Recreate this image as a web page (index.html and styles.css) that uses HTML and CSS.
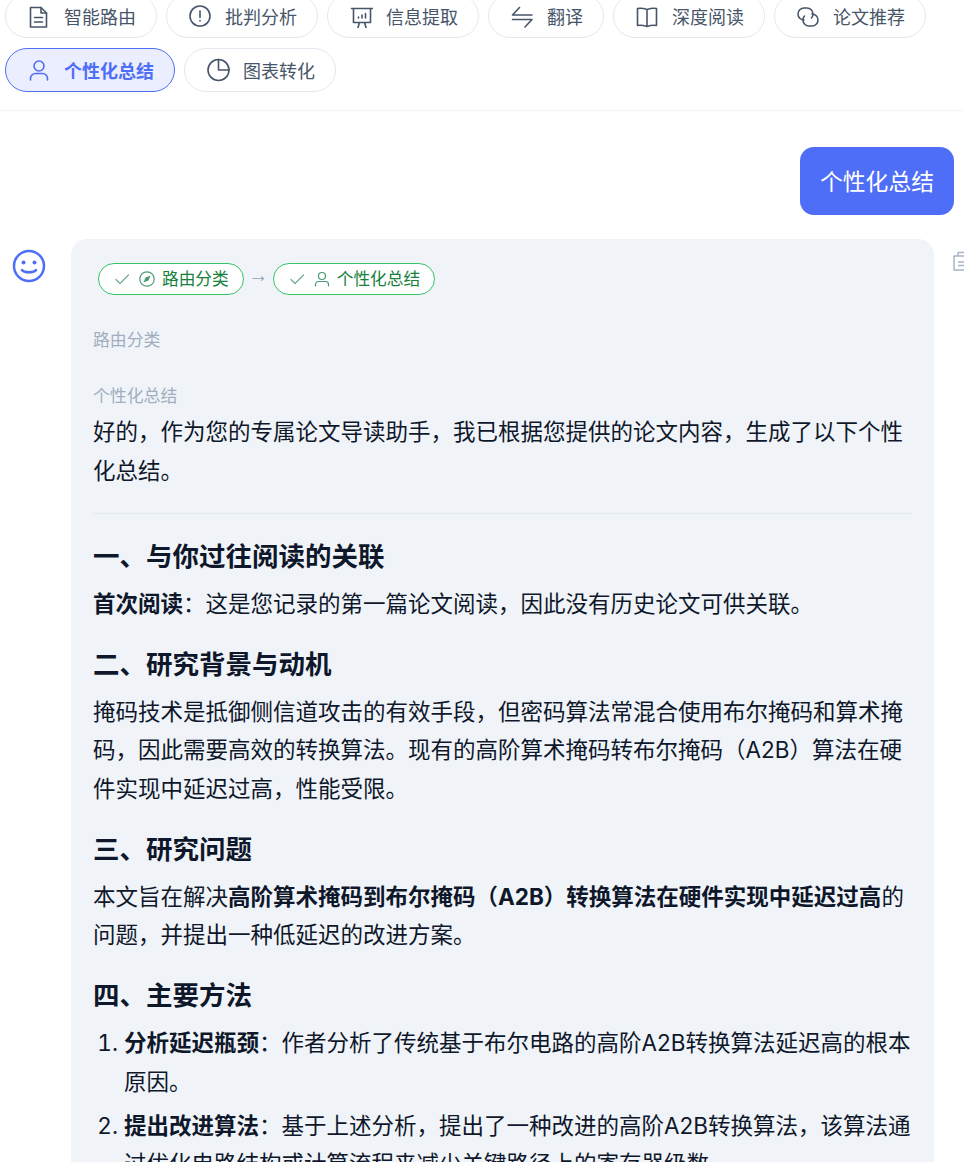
FILE: index.html
```html
<!DOCTYPE html>
<html lang="zh-CN">
<head>
<meta charset="UTF-8">
<meta name="viewport" content="width=device-width, initial-scale=1.0">
<title>个性化总结</title>
<link rel="stylesheet" href="styles.css">
</head>
<body>
<div class="tools">
    <button class="tool">
        <svg viewBox="0 0 24 24"><path d="M3.500 3.500h10.500l5.500 5.500v14h-16z"/><path d="M14 3.500V9h5.500M7.500 13.500h8M7.500 18h8"/></svg>
        <span>智能路由</span>
    </button>
    <button class="tool">
        <svg viewBox="0 0 24 24"><circle cx="12" cy="12" r="10"/><path d="M12 7v6.500M12 16.500v.5"/></svg>
        <span>批判分析</span>
    </button>
    <button class="tool">
        <svg viewBox="0 0 24 24"><path d="M2.500 4.500h21M4.500 4.500v14h17v-14M9 23.500l1.500-5M17 23.500l-1.500-5M9.500 14v-1M13 14v-3M16.500 14V9.500"/></svg>
        <span>信息提取</span>
    </button>
    <button class="tool">
        <svg viewBox="0 0 24 24"><path d="M9.500 3.500 2.500 11H22M2.500 15.500H22L15 23"/></svg>
        <span>翻译</span>
    </button>
    <button class="tool">
        <svg viewBox="0 0 24 24"><path d="M12 5.500C9 4.500 5 4 2.500 4.500V21.500C6 21 9 21.500 12 22.500 15 21.500 18 21 21.500 21.500V4.500C19 4 15 4.500 12 5.500zM12 5.500V22.500"/></svg>
        <span>深度阅读</span>
    </button>
    <button class="tool">
        <svg viewBox="0 0 24 24"><path d="M8 16A6 6 0 0 1 8 4H11A6 6 0 0 1 17 10 6 6 0 0 1 15.500 14"/><path d="M16 10A6 6 0 0 1 16 22H13A6 6 0 0 1 7 16 6 6 0 0 1 8.500 12"/></svg>
        <span>论文推荐</span>
    </button>
    <button class="tool active">
        <svg viewBox="0 0 24 24"><circle cx="12" cy="8" r="5"/><path d="M3.500 22v-1.500a5 5 0 0 1 5-5h7a5 5 0 0 1 5 5V22"/></svg>
        <span>个性化总结</span>
    </button>
    <button class="tool">
        <svg viewBox="0 0 24 24"><circle cx="12.500" cy="12" r="10.500"/><path d="M12.500 1.500V12H23"/></svg>
        <span>图表转化</span>
    </button>
</div>

<div class="chat">
    <div class="user-row">
        <div class="bubble">个性化总结</div>
    </div>
    <div class="bot-row">
        <svg class="avatar" viewBox="0 0 34 34"><circle cx="17" cy="17" r="15"/><circle class="eye" cx="11.500" cy="13.500" r="2"/><circle class="eye" cx="22.500" cy="13.500" r="2"/><path d="M10 21c2 3 12 3 14 0"/></svg>
        <div class="card">
            <div class="steps">
                <div class="step">
                    <svg class="check" viewBox="0 0 16 16"><path d="M2 8.500 6 12.500 14.500 4"/></svg>
                    <svg viewBox="0 0 16 16"><circle cx="8" cy="8" r="7.200"/><path class="fill" d="M11.500 4.500 9.500 9.500 4.500 11.500 6.500 6.500z"/></svg>
                    <span>路由分类</span>
                </div>
                <span class="arrow">→</span>
                <div class="step">
                    <svg class="check" viewBox="0 0 16 16"><path d="M2 8.500 6 12.500 14.500 4"/></svg>
                    <svg viewBox="0 0 16 16"><circle cx="8" cy="5" r="3.500"/><path d="M1.500 15v-1.500a3 3 0 0 1 3-3h7a3 3 0 0 1 3 3V15"/></svg>
                    <span>个性化总结</span>
                </div>
            </div>
            <div class="label first">路由分类</div>
            <div class="label second">个性化总结</div>
            <div class="answer">
                <p>好的，作为您的专属论文导读助手，我已根据您提供的论文内容，生成了以下个性化总结。</p>
                <hr>
                <h2>一、与你过往阅读的关联</h2>
                <p><strong>首次阅读</strong>：这是您记录的第一篇论文阅读，因此没有历史论文可供关联。</p>
                <h2>二、研究背景与动机</h2>
                <p>掩码技术是抵御侧信道攻击的有效手段，但密码算法常混合使用布尔掩码和算术掩码，因此需要高效的转换算法。现有的高阶算术掩码转布尔掩码（A2B）算法在硬件实现中延迟过高，性能受限。</p>
                <h2>三、研究问题</h2>
                <p>本文旨在解决<strong>高阶算术掩码到布尔掩码（A2B）转换算法在硬件实现中延迟过高</strong>的问题，并提出一种低延迟的改进方案。</p>
                <h2>四、主要方法</h2>
                <ol>
                    <li><strong>分析延迟瓶颈</strong>：作者分析了传统基于布尔电路的高阶A2B转换算法延迟高的根本原因。</li>
                    <li><strong>提出改进算法</strong>：基于上述分析，提出了一种改进的高阶A2B转换算法，该算法通过优化电路结构或计算流程来减少关键路径上的寄存器级数。</li>
                </ol>
            </div>
        </div>
        <svg class="copy" viewBox="0 0 24 24"><rect x="1" y="6" width="18" height="14"/><path d="M5 6V2.500h14V6M5 12h10M5 15.500h10"/></svg>
    </div>
</div>
</body>
</html>
```

FILE: styles.css
```css
* {
    box-sizing: border-box;
}
html, body {
    height: 1162px;
    overflow: hidden;
}
body {
    margin: 0;
    background-color: #fff;
    color: #0f172a;
    font-family: 'Inter', 'Noto Sans CJK SC', sans-serif;
    font-size: 22.5px;
    line-height: 38.25px;
}
svg {
    fill: none;
    stroke: currentColor;
    stroke-width: 1.6;
    stroke-linecap: round;
    stroke-linejoin: round;
    flex-shrink: 0;
}
.tools {
    display: flex;
    flex-wrap: wrap;
    gap: 10px 9px;
    margin-top: -6px;
    padding: 0 5px 18px;
    border-bottom: 1px solid #f1f5f9;
}
.tool {
    display: flex;
    align-items: center;
    gap: 13px;
    height: 44px;
    padding: 0 20px 0 21px;
    background-color: #fff;
    border: 1px solid #e2e8f0;
    border-radius: 22px;
    color: #475569;
    font-family: inherit;
    font-size: 18px;
}
.tool svg {
    width: 24px;
    height: 24px;
}
.tool.active {
    background-color: #eaeefe;
    border-color: #4f6ef7;
    color: #4f6ef7;
    font-weight: 700;
}
.chat {
    padding: 36px 10px 0 0;
}
.user-row {
    display: flex;
    justify-content: flex-end;
}
.bubble {
    padding: 16px 20px 14px;
    background-color: #4f6ef7;
    border-radius: 14px;
    color: #fff;
    font-size: 22.8px;
}
.bot-row {
    display: flex;
    align-items: flex-start;
    margin-top: 24px;
}
.avatar {
    width: 34px;
    height: 34px;
    margin: 10px 25px 0 12px;
    color: #4f6ef7;
    stroke-width: 2.500;
}
.avatar .eye {
    fill: currentColor;
    stroke: none;
}
.card {
    width: 863px;
    flex-shrink: 0;
    padding: 24px 22px;
    background-color: #f0f4f9;
    border-radius: 16px;
}
.copy {
    width: 24px;
    height: 24px;
    margin: 11px 0 0 19px;
    color: #a8b4c8;
    stroke-width: 1.5;
    stroke-linecap: butt;
}
.steps {
    display: flex;
    align-items: center;
    gap: 4.500px;
    margin-left: 5px;
}
.step {
    display: flex;
    align-items: center;
    gap: 9px;
    height: 32px;
    padding: 0 14px 0 15px;
    background-color: #fff;
    border: 1px solid #34c565;
    border-radius: 16px;
    color: #16803d;
    font-size: 16.700px;
    line-height: 1;
}
.step span {
    margin-left: -2px;
}
.step svg {
    width: 16px;
    height: 16px;
    stroke-width: 1.200;
    color: #4b9a73;
}
.step .check {
    color: #74a98d;
}
.step .fill {
    fill: currentColor;
    stroke: none;
}
.arrow {
    margin-bottom: 8px;
    color: #94a3b8;
    font-family: 'Liberation Sans', sans-serif;
    font-size: 20px;
    line-height: 1;
}
.label {
    color: #a0aec0;
    font-size: 16.875px;
    line-height: 26px;
}
.label.first {
    margin-top: 32px;
}
.label.second {
    margin-top: 30px;
    margin-bottom: 4px;
}
.answer p {
    margin: 0;
}
.answer hr {
    margin: 23px 0 24px;
    border: 0;
    border-top: 1px solid #e2e8f0;
}
.answer h2 {
    margin: 0 0 11px;
    font-size: 26.500px;
    line-height: 36px;
    font-weight: 700;
}
.answer p + h2 {
    margin-top: 23px;
}
.answer ol {
    margin: 3px 0 0;
    padding-left: 31px;
}
.answer li {
    margin-bottom: 6px;
}
.answer strong {
    font-weight: 700;
}
```
